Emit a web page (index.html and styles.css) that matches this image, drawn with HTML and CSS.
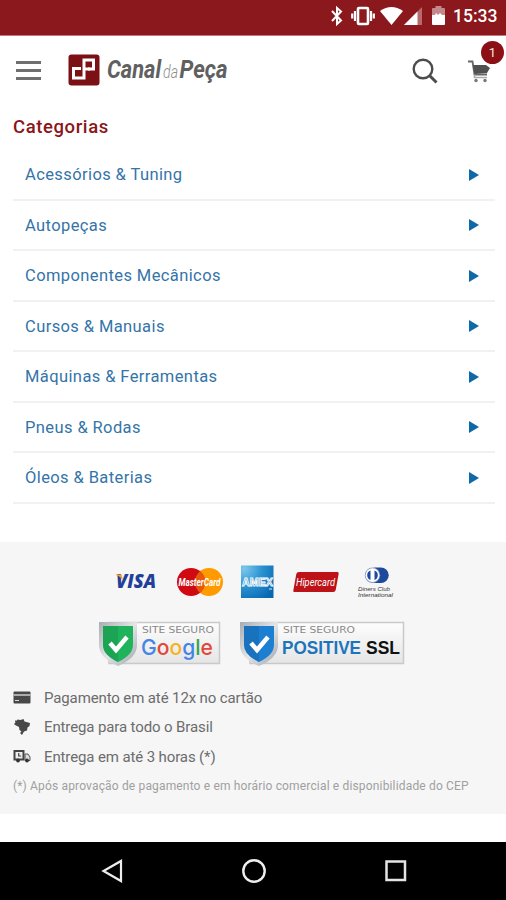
FILE: index.html
```html
<!DOCTYPE html>
<html lang="pt-BR">
<head>
  <meta charset="UTF-8">
  <meta name="viewport" content="width=device-width, initial-scale=1.0">
  <title>Canal da Peça</title>
  <link rel="stylesheet" href="styles.css">
</head>
<body>
  <div class="status-bar">
    <svg class="bluetooth" width="12" height="20" viewBox="0 0 12 20">
      <path d="M1 5l9 9.5L6 18V2l4 3.500L1 15" fill="none" stroke="#fff" stroke-width="2"/>
    </svg>
    <svg class="vibrate" width="24" height="20" viewBox="0 0 24 20">
      <rect x="7" y="2" width="10" height="16" rx="1" fill="none" stroke="#fff" stroke-width="2.6"/>
      <path d="M4 5v10M20 5v10M1.2 7.5v5M22.8 7.5v5" stroke="#fff" stroke-width="2.2"/>
    </svg>
    <svg class="wifi" width="23" height="18" viewBox="0 0 23 18">
      <path d="M0 4Q11.5-4 23 4L11.5 18z" fill="#fff"/>
    </svg>
    <svg class="signal" width="18" height="18" viewBox="0 0 18 18">
      <path d="M18 0v18H0z" fill="#b9686c"/>
      <path d="M13.5 4.5V18H0z" fill="#fff"/>
    </svg>
    <svg class="battery" width="13" height="19" viewBox="0 0 13 19">
      <path d="M3.5 2V0h6v2H12q1 0 1 1v6H0V3q0-1 1-1z" fill="#c4878a"/>
      <path d="M0 9h3l1-2 2 2 2-2 2 2h3v9q0 1-1 1H1q-1 0-1-1z" fill="#fff"/>
    </svg>
    <span class="clock">15:33</span>
  </div>

  <header class="header">
    <button class="menu-button" aria-label="Menu">
      <span></span>
      <span></span>
      <span></span>
    </button>
    <svg class="logo" width="164" height="34" viewBox="0 0 164 34">
      <rect x="0.5" y="0.5" width="31" height="31" rx="3" fill="#7b1114"/>
      <path d="M13 14.500H5.500v9.500h10.500V6h9.500v9H20" fill="none" stroke="#fff" stroke-width="3"/>
      <path d="M16 15h6" fill="none" stroke="#fff" stroke-width="3"/>
      <text x="39" y="24" font-size="25" font-weight="700" textLength="54" lengthAdjust="spacingAndGlyphs">Canal</text>
      <text class="logo-light" x="95" y="24" font-size="18" textLength="15" lengthAdjust="spacingAndGlyphs">da</text>
      <text x="111.500" y="24" font-size="25" font-weight="700" textLength="48" lengthAdjust="spacingAndGlyphs">Peça</text>
    </svg>
    <svg class="search" width="26" height="26" viewBox="0 0 26 26">
      <circle cx="11" cy="11" r="9.3" fill="none" stroke="#4c4c4c" stroke-width="2.4"/>
      <path d="M17.5 17.5l7 7" stroke="#4c4c4c" stroke-width="3"/>
    </svg>
    <div class="cart">
      <svg width="23" height="23" viewBox="0 0 23 23">
        <path d="M0 1.500h4.500l2 13H19" fill="none" stroke="#666" stroke-width="1.800"/>
        <path d="M5 5h13l4 3-3 5-12.500 1z" fill="#505050"/>
        <path d="M6.500 14.500v3H19" fill="none" stroke="#aaa" stroke-width="1.500"/>
        <circle cx="8" cy="20.500" r="1.700" fill="#777"/>
        <circle cx="17" cy="20.500" r="1.700" fill="#777"/>
      </svg>
      <span class="cart-count">1</span>
    </div>
  </header>

  <main class="categories">
    <h1>Categorias</h1>
    <ul>
      <li><a href="#">Acessórios &amp; Tuning</a></li>
      <li><a href="#">Autopeças</a></li>
      <li><a href="#">Componentes Mecânicos</a></li>
      <li><a href="#">Cursos &amp; Manuais</a></li>
      <li><a href="#">Máquinas &amp; Ferramentas</a></li>
      <li><a href="#">Pneus &amp; Rodas</a></li>
      <li><a href="#">Óleos &amp; Baterias</a></li>
    </ul>
  </main>

  <footer class="footer">
    <div class="payments">
      <svg class="visa" width="42" height="34" viewBox="0 0 42 34">
        <text x="1" y="23" font-family="Open Sans, sans-serif" font-size="19" font-weight="800" font-style="italic" fill="#21409a" textLength="40" lengthAdjust="spacingAndGlyphs">VISA</text>
        <path d="M0 9.500h6.500l1.500 6q-2-4-8-6z" fill="#f3a32b"/>
      </svg>
      <svg width="46" height="34" viewBox="0 0 46 34">
        <circle cx="32" cy="17" r="14" fill="#ff9a00"/>
        <circle cx="14" cy="17" r="14" fill="#cf0a12"/>
        <path d="M23 6.300a14 14 0 0 1 0 21.400a14 14 0 0 1 0-21.400z" fill="#e8580b"/>
        <text x="1.500" y="20.500" font-family="Roboto, sans-serif" font-size="10" font-weight="700" font-style="italic" fill="#fff" textLength="42" lengthAdjust="spacingAndGlyphs">MasterCard</text>
      </svg>
      <svg width="33" height="34" viewBox="0 0 33 34">
        <defs>
          <radialGradient id="amex" cx="0.1" cy="0.1" r="1.1">
            <stop offset="0" stop-color="#7cc6ec"/>
            <stop offset="0.5" stop-color="#2a93d0"/>
            <stop offset="1" stop-color="#0968b2"/>
          </radialGradient>
        </defs>
        <rect x="0" y="0.5" width="32.5" height="32.5" fill="url(#amex)"/>
        <text x="1" y="20.500" font-family="Liberation Sans, sans-serif" font-size="10" font-weight="700" fill="#2b84c3" stroke="#fff" stroke-width="0.800" textLength="31" lengthAdjust="spacingAndGlyphs">AMEX</text>
        <path d="M28 24h3" stroke="#d4ecfa"/>
      </svg>
      <svg class="hipercard" width="46" height="34" viewBox="0 0 46 34">
        <path d="M6 7h38.500q1.500 0 1.200 1.500l-3 16.500q-.5 2-2.500 2H1.500Q0 27 .3 25.500l3-16.500Q3.800 7 6 7z" fill="#bd1218"/>
        <text x="3" y="20.500" font-family="Roboto, sans-serif" font-size="10" font-style="italic" fill="#fff" textLength="39" lengthAdjust="spacingAndGlyphs">Hipercard</text>
      </svg>
      <svg width="38" height="34" viewBox="0 0 38 34">
        <path d="M17 2.500h7a7.700 7.700 0 0 1 0 15.400h-7z" fill="#1d4a9c"/>
        <circle cx="15.500" cy="10.200" r="7.700" fill="#7d96c6"/>
        <circle cx="15.500" cy="10.200" r="6.900" fill="#fff"/>
        <path d="M13.500 5.500a5 5 0 0 0 0 9.400zM17.500 5.500a5 5 0 0 1 0 9.400z" fill="#1d4a9c"/>
        <text x="1" y="25.500" font-family="Liberation Sans, sans-serif" font-size="5.500" font-style="italic" fill="#333" textLength="32" lengthAdjust="spacingAndGlyphs">Diners Club</text>
        <text x="1" y="32" font-family="Liberation Sans, sans-serif" font-size="5.500" font-style="italic" fill="#333" textLength="35" lengthAdjust="spacingAndGlyphs">International</text>
      </svg>
    </div>

    <div class="seals">
      <svg width="122" height="46" viewBox="0 0 122 46">
        <defs>
          <linearGradient id="plate" x1="0" y1="0" x2="0" y2="1">
            <stop offset="0" stop-color="#fdfdfd"/>
            <stop offset="1" stop-color="#e5e5e5"/>
          </linearGradient>
          <linearGradient id="rim" x1="0" y1="0" x2="1" y2="1">
            <stop offset="0" stop-color="#a7adb2"/>
            <stop offset="0.5" stop-color="#e3e5e7"/>
            <stop offset="1" stop-color="#9da3a9"/>
          </linearGradient>
        </defs>
        <rect x="10" y="1.500" width="110.500" height="41" fill="url(#plate)" stroke="#c9c9c9" stroke-width="1.500"/>
        <path d="M0 1h38v23q0 13-19 21Q0 37 0 24z" fill="url(#rim)"/>
        <path d="M4 5h30v19q0 10-15 17Q4 34 4 24z" fill="#1fb45b"/>
        <path d="M4 5h15v36Q4 34 4 24z" fill="#159149" opacity=".45"/>
        <path d="M11 22l6 7 11-13" fill="none" stroke="#fff" stroke-width="4.500"/>
        <text class="seal-label" x="43" y="12" textLength="72" lengthAdjust="spacingAndGlyphs">SITE SEGURO</text>
        <text x="42" y="34" font-family="Inter, sans-serif" font-size="21.500" font-weight="500" textLength="72" lengthAdjust="spacingAndGlyphs"><tspan fill="#4285e8">G</tspan><tspan fill="#e2473a">o</tspan><tspan fill="#f2b51d">o</tspan><tspan fill="#4285e8">g</tspan><tspan fill="#36a457">l</tspan><tspan fill="#e2473a">e</tspan></text>
      </svg>
      <svg width="165" height="46" viewBox="0 0 165 46">
        <rect x="10" y="1.500" width="153.500" height="41" fill="url(#plate)" stroke="#c9c9c9" stroke-width="1.500"/>
        <path d="M0 1h38v23q0 13-19 21Q0 37 0 24z" fill="url(#rim)"/>
        <path d="M4 5h30v19q0 10-15 17Q4 34 4 24z" fill="#1d7fd1"/>
        <path d="M4 5h15v36Q4 34 4 24z" fill="#145f9f" opacity=".4"/>
        <path d="M11 22l6 7 11-13" fill="none" stroke="#fff" stroke-width="4.500"/>
        <text class="seal-label" x="43" y="12" textLength="72" lengthAdjust="spacingAndGlyphs">SITE SEGURO</text>
        <text x="42" y="33" font-family="Liberation Sans, sans-serif" font-size="17.500" font-weight="700" fill="#1c75bc" textLength="79" lengthAdjust="spacingAndGlyphs">POSITIVE</text>
        <text x="126" y="33" font-family="Liberation Sans, sans-serif" font-size="17.500" font-weight="700" fill="#111" textLength="34" lengthAdjust="spacingAndGlyphs">SSL</text>
      </svg>
    </div>

    <ul class="benefits">
      <li>
        <svg width="18" height="16" viewBox="0 0 18 16">
          <rect x="0.5" y="1.5" width="17" height="12" rx="1" fill="#484848"/>
          <path d="M.5 5h17" stroke="#ccc" stroke-width="1.500"/>
          <path d="M2 10.500h4" stroke="#ddd"/>
        </svg>
        <span>Pagamento em até 12x no cartão</span>
      </li>
      <li>
        <svg width="18" height="16" viewBox="0 0 18 16">
          <path d="M4.500 0.500L7.500 1 10.500 0l1 2.500 5.500 1.500-.5 3-2 1.500-.5 3-3 1-2 3.500-2-2 1.500-1.500-2-1.500-.5-3-3-1.500L.8 5l1.500-1L2 1.500h2z" fill="#484848"/>
        </svg>
        <span>Entrega para todo o Brasil</span>
      </li>
      <li>
        <svg width="18" height="16" viewBox="0 0 18 16">
          <path d="M1.500 2h9v8.500h-9z" fill="#eee" stroke="#444" stroke-width="2"/>
          <path d="M5.700 4v3h2.500" fill="none" stroke="#444" stroke-width="1.200"/>
          <path d="M12 5h3l2 3v3.500h-5z" fill="#ddd" stroke="#555"/>
          <circle cx="5" cy="11.500" r="1.900" fill="#333"/>
          <circle cx="14" cy="11.500" r="1.900" fill="#333"/>
        </svg>
        <span>Entrega em até 3 horas (*)</span>
      </li>
    </ul>
    <p class="note">(*) Após aprovação de pagamento e em horário comercial e disponibilidade do CEP</p>
  </footer>

  <nav class="nav-bar">
    <svg width="22" height="24" viewBox="0 0 22 24">
      <path d="M20 2v20L2.500 12z" fill="none" stroke="#eee" stroke-width="2.200"/>
    </svg>
    <svg width="24" height="24" viewBox="0 0 24 24">
      <circle cx="12" cy="12" r="10.7" fill="none" stroke="#eee" stroke-width="2.4"/>
    </svg>
    <svg width="22" height="22" viewBox="0 0 22 22">
      <rect x="1.5" y="1.5" width="18.5" height="18.5" fill="none" stroke="#e4e4e4" stroke-width="2.5"/>
    </svg>
  </nav>
</body>
</html>
```
FILE: styles.css
```css
* {
  box-sizing: border-box;
}
body {
  margin: 0;
  height: 900px;
  display: flex;
  flex-direction: column;
  font-family: Roboto, "Liberation Sans", sans-serif;
  background: #fff;
  color: #6c6c6c;
}
svg {
  display: block;
  flex: none;
  overflow: visible;
}
ul {
  list-style: none;
  margin: 0;
  padding: 0;
}

/* Status bar */
.status-bar {
  height: 36px;
  padding: 0 9px 4px 0;
  display: flex;
  align-items: center;
  justify-content: flex-end;
  background: #8b181d;
  border-bottom: 1px solid #c9777b;
}
.vibrate {
  margin-left: 8px;
}
.wifi {
  margin-left: 5px;
}
.signal {
  margin-left: 1px;
}
.battery {
  margin-left: 10px;
}
.clock {
  width: 44px;
  margin-left: 8px;
  font-size: 17.5px;
  font-weight: 500;
  color: #fff;
  white-space: nowrap;
}

/* Header */
.header {
  height: 70px;
  padding: 0 15px 0 16px;
  display: flex;
  align-items: center;
}
.menu-button {
  width: 25px;
  margin-bottom: 1px;
  padding: 0;
  border: none;
  background: none;
  display: flex;
  flex-direction: column;
  gap: 5px;
}
.menu-button span {
  height: 3px;
  background: #707070;
}
.logo {
  margin-left: 27px;
  fill: #606060;
  font-style: italic;
}
.logo-light {
  fill: #8c8c8c;
  font-weight: 300;
}
.search {
  margin-left: auto;
}
.cart {
  position: relative;
  margin-left: 30px;
}
.cart-count {
  position: absolute;
  top: -19px;
  left: 13px;
  width: 23px;
  height: 23px;
  border-radius: 50%;
  background: #8b0f14;
  color: #eed;
  font-size: 13px;
  line-height: 23px;
  text-align: center;
}

/* Categories */
.categories {
  height: 436px;
  padding: 8px 11px 0 13px;
}
.categories h1 {
  margin: 0;
  height: 36px;
  font-size: 18.5px;
  line-height: 26px;
  font-weight: 500;
  letter-spacing: 0.6px;
  color: #8b1519;
}
.categories li {
  height: 50.5px;
  border-bottom: 2px solid #f1f1f1;
}
.categories a {
  height: 49px;
  padding: 0 16px 0 12px;
  display: flex;
  align-items: center;
  justify-content: space-between;
  font-size: 16.5px;
  letter-spacing: 0.4px;
  color: #3474a8;
  text-decoration: none;
}
.categories a::after {
  content: "";
  border-left: 10px solid #0f69a8;
  border-top: 6.5px solid transparent;
  border-bottom: 6.5px solid transparent;
}

/* Footer */
.footer {
  height: 272px;
  padding: 23px 13px 0;
  background: #f6f6f6;
}
.payments {
  padding-left: 4px;
  display: flex;
  justify-content: center;
  gap: 18px;
}
.visa {
  margin-right: 2px;
}
.hipercard {
  margin-left: 1px;
}
.seals {
  margin-top: 22px;
  padding-right: 2px;
  display: flex;
  justify-content: center;
  gap: 19px;
}
.seal-label {
  font-family: "DejaVu Sans", sans-serif;
  font-size: 8.5px;
  fill: #888;
}
.benefits {
  margin-top: 16px;
}
.benefits li {
  height: 29.5px;
  display: flex;
  align-items: center;
  gap: 13px;
  font-size: 15px;
  letter-spacing: -0.12px;
}
.note {
  margin: 0;
  font-size: 12px;
  line-height: 28px;
  letter-spacing: 0.16px;
  color: #a0a0a0;
  white-space: nowrap;
}

/* Android navigation */
.nav-bar {
  height: 58px;
  margin-top: auto;
  padding: 0 99px 0 101px;
  display: flex;
  align-items: center;
  justify-content: space-between;
  background: #000;
}
```
